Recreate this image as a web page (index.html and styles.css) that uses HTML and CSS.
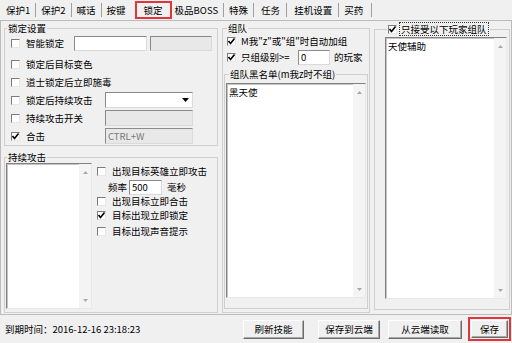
FILE: index.html
```html
<!DOCTYPE html>
<html lang="zh">
<head>
  <meta charset="UTF-8">
  <title>锁定</title>
  <link rel="stylesheet" href="styles.css">
</head>
<body>

  <!-- tab strip -->
  <div class="tabs">
    <span class="tab">保护1</span><span class="sep"></span>
    <span class="tab">保护2</span><span class="sep"></span>
    <span class="tab">喊话</span><span class="sep"></span>
    <span class="tab">按键</span>
    <span class="tab tab-on">锁定</span>
    <span class="tab flush">极品BOSS</span><span class="sep"></span>
    <span class="tab">特殊</span><span class="sep"></span>
    <span class="tab tab-wide">任务</span><span class="sep"></span>
    <span class="tab tab-wide">挂机设置</span><span class="sep"></span>
    <span class="tab">买药</span><span class="sep sep-last"></span>
  </div>

  <div class="page">

    <!-- left column -->
    <div class="col col-left">
      <fieldset class="group lock">
        <legend>锁定设置</legend>
        <div class="row row-first">
          <span class="chk chk-short"><i class="box"></i>智能锁定</span>
          <span class="edit edit-smart"></span>
          <span class="edit edit-off edit-smart2"></span>
        </div>
        <div class="row"><span class="chk"><i class="box"></i>锁定后目标变色</span></div>
        <div class="row"><span class="chk"><i class="box"></i>道士锁定后立即施毒</span></div>
        <div class="row">
          <span class="chk chk-long"><i class="box"></i>锁定后持续攻击</span>
          <span class="edit edit-tall combo">
            <svg width="7" height="4" viewBox="0 0 7 4"><polygon points="0,0 7,0 3.5,4" fill="#000"/></svg>
          </span>
        </div>
        <div class="row">
          <span class="chk chk-long"><i class="box"></i>持续攻击开关</span>
          <span class="edit edit-tall edit-off"></span>
        </div>
        <div class="row">
          <span class="chk chk-long"><i class="box on"><svg width="9" height="9" viewBox="0 0 9 9"><polyline points="1.5,4 3.5,6.5 7.5,1.5" fill="none" stroke="#000" stroke-width="1.6"/></svg></i>合击</span>
          <span class="edit edit-tall edit-off">CTRL+W</span>
        </div>
      </fieldset>

      <fieldset class="group attack">
        <legend>持续攻击</legend>
        <div class="list list-attack">
          <div class="list-body"></div>
          <div class="sb">
            <svg width="5" height="3" viewBox="0 0 5 3"><polygon points="0,3 5,3 2.5,0" fill="#a8a8a8"/></svg>
            <svg width="5" height="3" viewBox="0 0 5 3"><polygon points="0,0 5,0 2.5,3" fill="#a8a8a8"/></svg>
          </div>
        </div>
        <div class="opts">
          <div class="opt"><span class="chk"><i class="box"></i>出现目标英雄立即攻击</span></div>
          <div class="opt opt-freq">频率<span class="edit edit-freq">500</span><span class="unit">毫秒</span></div>
          <div class="opt opt-tight"><span class="chk"><i class="box"></i>出现目标立即合击</span></div>
          <div class="opt"><span class="chk"><i class="box on"><svg width="9" height="9" viewBox="0 0 9 9"><polyline points="1.5,4 3.5,6.5 7.5,1.5" fill="none" stroke="#000" stroke-width="1.6"/></svg></i>目标出现立即锁定</span></div>
          <div class="opt"><span class="chk"><i class="box"></i>目标出现声音提示</span></div>
        </div>
      </fieldset>
    </div>

    <!-- middle column -->
    <div class="col col-mid">
      <fieldset class="group team">
        <legend>组队</legend>
        <div class="row row-m1">
          <span class="chk chk-tight"><i class="box on"><svg width="9" height="9" viewBox="0 0 9 9"><polyline points="1.5,4 3.5,6.5 7.5,1.5" fill="none" stroke="#000" stroke-width="1.6"/></svg></i>M我"z"或"组"时自动加组</span>
        </div>
        <div class="row row-m2">
          <span class="chk chk-tight chk-level"><i class="box on"><svg width="9" height="9" viewBox="0 0 9 9"><polyline points="1.5,4 3.5,6.5 7.5,1.5" fill="none" stroke="#000" stroke-width="1.6"/></svg></i>只组级别&gt;=</span>
          <span class="edit edit-level">0</span>
          <span>的玩家</span>
        </div>
        <fieldset class="group black">
          <legend>组队黑名单(m我z时不组)</legend>
          <div class="list list-fill">
            <div class="list-body">黑天使</div>
            <div class="sb">
              <svg width="5" height="3" viewBox="0 0 5 3"><polygon points="0,3 5,3 2.5,0" fill="#a8a8a8"/></svg>
              <svg width="5" height="3" viewBox="0 0 5 3"><polygon points="0,0 5,0 2.5,3" fill="#a8a8a8"/></svg>
            </div>
          </div>
        </fieldset>
      </fieldset>
    </div>

    <!-- right column -->
    <div class="col col-right">
      <fieldset class="group accept">
        <legend><i class="box on"><svg width="9" height="9" viewBox="0 0 9 9"><polyline points="1.5,4 3.5,6.5 7.5,1.5" fill="none" stroke="#000" stroke-width="1.6"/></svg></i><span class="focus">只接受以下玩家组队</span></legend>
        <div class="list list-fill">
          <div class="list-body">天使辅助</div>
          <div class="sb">
            <svg width="5" height="3" viewBox="0 0 5 3"><polygon points="0,3 5,3 2.5,0" fill="#a8a8a8"/></svg>
            <svg width="5" height="3" viewBox="0 0 5 3"><polygon points="0,0 5,0 2.5,3" fill="#a8a8a8"/></svg>
          </div>
        </div>
      </fieldset>
    </div>
  </div>

  <!-- status bar -->
  <div class="status">
    <span class="expire">到期时间：2016-12-16 23:18:23</span>
    <span class="btn btn-refresh">刷新技能</span>
    <span class="btn btn-upload">保存到云端</span>
    <span class="btn btn-download">从云端读取</span>
    <span class="mark"><span class="btn btn-save">保存</span></span>
  </div>

</body>
</html>
```

FILE: styles.css
```css
body {
  margin: 0;
  width: 512px;
  height: 343px;
  overflow: hidden;
  background: #f0f0f0;
  font-family: "Noto Sans CJK SC", "Liberation Sans", sans-serif;
  font-size: 9.5px;
  line-height: 12px;
  color: #000;
}

/* tabs */
.tabs {
  display: flex;
  align-items: center;
  height: 20px;
  padding-left: 1px;
}

.tab {
  padding: 0 5px;
  white-space: nowrap;
}

.tab-wide {
  padding: 0 6px 0 7px;
}

.tab-on {
  margin: 0 3px 0 4px;
  padding: 1px 7px;
  border: 2px solid #e0353b;
}

.flush {
  padding-left: 0;
}

.sep {
  width: 1px;
  height: 14px;
  background: #a0a0a0;
}

.sep-last {
  margin-left: 3px;
}

/* page frame */
.page {
  display: flex;
  gap: 4px;
  height: 295px;
  box-sizing: border-box;
  padding: 1px 1px 0 3px;
  border: 1px solid #bcbcbc;
}

.col {
  display: flex;
  flex-direction: column;
}

.col-left {
  width: 214px;
}

.col-mid {
  width: 148px;
}

.col-right {
  width: 136px;
}

.group {
  margin: 0;
  padding: 0;
  min-width: 0;
  border: 1px solid #cfcfcf;
}

.group legend {
  margin-left: 2px;
  padding: 0 1px;
  line-height: 12px;
}

/* controls */
.row {
  display: flex;
  align-items: center;
  height: 18px;
  padding-left: 6px;
}

.row-first {
  margin-bottom: 3px;
}

.chk {
  display: flex;
  align-items: center;
  white-space: nowrap;
}

.chk-short {
  width: 63px;
}

.chk-long {
  width: 94px;
}

.box {
  display: block;
  flex: none;
  width: 9px;
  height: 9px;
  margin-right: 6px;
  box-sizing: border-box;
  background: #fff;
  border: 1px solid;
  border-color: #7c7c7c #e6e6e6 #e6e6e6 #7c7c7c;
  position: relative;
}

.box svg {
  position: absolute;
  left: -1px;
  top: -1px;
}

.edit {
  display: flex;
  align-items: center;
  box-sizing: border-box;
  height: 15px;
  padding-left: 2px;
  background: #fff;
  border: 1px solid;
  border-color: #8a8a8a #dadada #dadada #8a8a8a;
  color: #000;
  white-space: nowrap;
}

.edit-off {
  background: #e8e8e8;
  color: #7a7a7a;
}

.edit-smart {
  width: 73px;
}

.edit-smart2 {
  width: 62px;
  margin-left: 3px;
}

.edit-tall {
  width: 88px;
  height: 16px;
}

.combo {
  justify-content: flex-end;
  padding-right: 3px;
}

/* list boxes */
.list {
  display: flex;
  box-sizing: border-box;
  background: #fff;
  border: 1px solid;
  border-color: #828282 #e8e8e8 #e8e8e8 #828282;
  box-shadow: inset 1px 1px #c4c4c4;
}

.list-body {
  flex: 1;
  padding: 2px 1px 0 2px;
}

.sb {
  width: 12px;
  display: flex;
  flex-direction: column;
  justify-content: space-between;
  align-items: center;
  padding: 7px 0 6px;
  background: #f4f4f4;
}

/* continuous attack */
.attack {
  flex: 1;
  display: flex;
  margin: 5px 0 1px;
}

.list-attack {
  width: 86px;
  margin: 0 0 3px 1px;
}

.opts {
  margin-left: 5px;
}

.opt {
  display: flex;
  align-items: center;
  height: 16px;
}

.opt-tight {
  height: 12px;
}

.opt-freq {
  padding-left: 11px;
}

.edit-freq {
  width: 33px;
  height: 15px;
  margin-left: 2px;
}

.unit {
  margin-left: 5px;
}

/* team */
.team {
  flex: 1;
  display: flex;
  flex-direction: column;
  margin-bottom: 1px;
  padding-bottom: 3px;
}

.team > legend {
  margin-left: 4px;
}

.row-m1 {
  height: 14px;
  padding-left: 4px;
}

.row-m2 {
  padding-left: 4px;
}

.chk-tight .box {
  margin-right: 5px;
}

.chk-level {
  width: 71px;
}

.edit-level {
  width: 32px;
  height: 15px;
  margin-right: 4px;
}

.black {
  flex: 1;
  display: flex;
  flex-direction: column;
  margin: 2px 1px 0;
  padding-bottom: 10px;
}

.black > legend {
  margin-left: 4px;
}

.list-fill {
  flex: 1;
  margin: 3px 1px 0;
}

/* accept list */
.accept {
  flex: 1;
  display: flex;
  flex-direction: column;
  margin-bottom: 4px;
  padding: 0 2px 10px 10px;
}

.accept > legend {
  display: flex;
  align-items: center;
}

.accept > legend .box {
  margin-right: 2px;
}

.focus {
  border: 1px dotted #333;
  padding: 0 1px;
}

.accept .list-fill {
  margin: 1px 0 0;
}

/* status bar */
.status {
  display: flex;
  align-items: center;
  height: 28px;
  padding: 0 1px 0 5px;
}

.expire {
  flex: 1;
  white-space: nowrap;
}

.btn {
  display: flex;
  align-items: center;
  justify-content: center;
  box-sizing: border-box;
  height: 19px;
  background: #f0f0f0;
  border: 1px solid;
  border-color: #fff #6d6d6d #6d6d6d #fff;
  box-shadow: inset -1px -1px #a8a8a8;
  white-space: nowrap;
}

.btn-refresh {
  width: 61px;
  margin-right: 14px;
}

.btn-upload {
  width: 62px;
  margin-right: 8px;
}

.btn-download {
  width: 74px;
  margin-right: 6px;
}

.mark {
  padding: 1px;
  border: 2px solid #e0353b;
}

.btn-save {
  width: 37px;
  height: 18px;
}
```
